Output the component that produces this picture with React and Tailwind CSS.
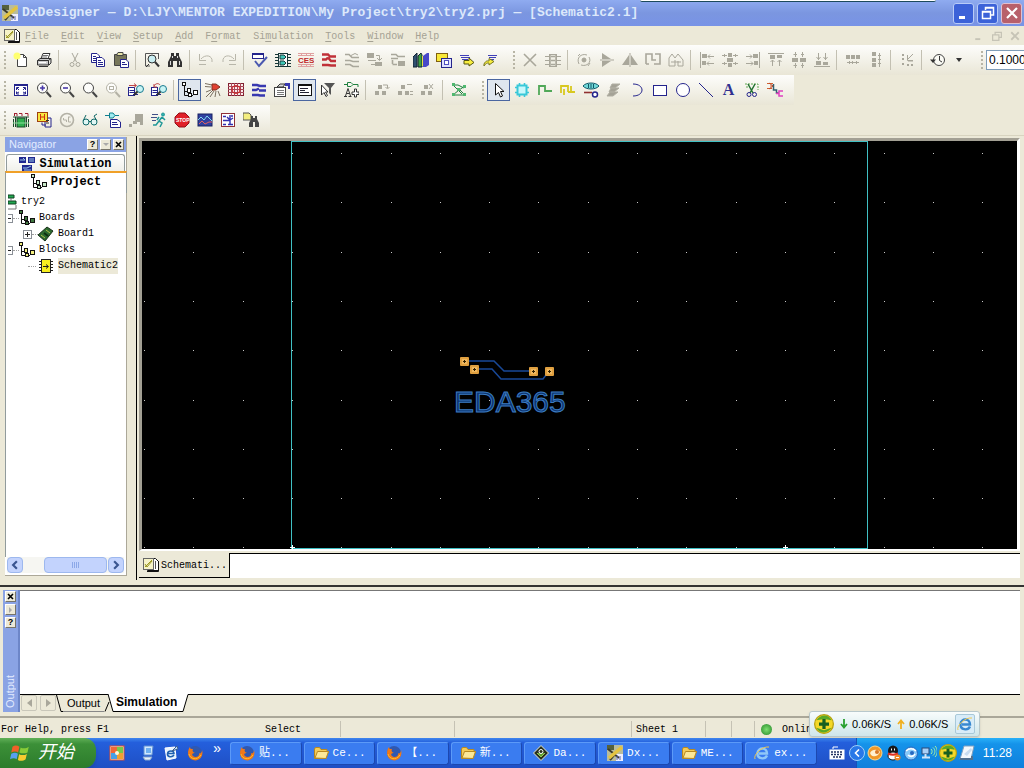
import React from 'react';

const NAVY = '#24248c';
const GREY = '#a9a79b';

const Icon = ({ children, color = '#333333', size = 'size-4' }) => (
  <svg
    viewBox="0 0 16 16"
    className={`${size} shrink-0`}
    fill="none"
    stroke={color}
    strokeWidth="1"
    aria-hidden="true"
  >
    {children}
  </svg>
);

const Box = ({ x, y, w, h, fill, stroke }) => (
  <rect x={x + 0.5} y={y + 0.5} width={w - 1} height={h - 1} fill={fill || 'none'} stroke={stroke} />
);

// Align / distribute icons share the same small grey blocks and arrows
const Blocks = ({ items, d }) => (
  <Icon color={GREY}>
    {items.map(([x, y, w, h], i) => (
      <rect key={i} x={x} y={y} width={w} height={h} fill={GREY} stroke="none" />
    ))}
    <path d={d} />
  </Icon>
);

const TreeGlyph = ({ fill = '#fff' }) => (
  <>
    <path d="M2.5 4V13.5H11M5 9.5H7M2.5 9.5H5M7.5 11V13.5" stroke="#111" />
    <Box x={0} y={0} w={4} h={4} fill={fill} stroke="#111" />
    <Box x={5} y={6} w={4} h={5} fill={fill} stroke="#111" />
    <Box x={11} y={8} w={5} h={5} fill={fill} stroke="#111" />
    <Box x={6} y={11} w={4} h={4} fill={fill} stroke="#111" />
  </>
);

const Magnifier = ({ children, color = '#444' }) => (
  <Icon color={color}>
    <circle cx="6.5" cy="6" r="5" fill="#fdfdfb" />
    <path d="M10.5 10L15 15" strokeWidth="2" />
    {children}
  </Icon>
);

const Arrowed = ({ flip }) => (
  <Icon>
    <Box x={0} y={5} w={7} h={9} fill="#fff" stroke={NAVY} />
    <path d="M1.5 8.5H6M1.5 10.5H6M5 12.5H10" stroke={NAVY} />
    <circle cx="12" cy="7" r="3.5" fill="#c8f4f4" stroke="#1b7a90" />
    <path d="M9.5 9.5L6 13" stroke="#333" strokeWidth="2" />
    <path d={flip ? 'M3 4.5C4 1 8 1 9 3M3 2V5H6' : 'M1 3.5H8M6 1.5L8.5 3.5L6 5.5'} stroke="#c04848" />
  </Icon>
);

const Binoculars = () => (
  <Icon>
    <path d="M4 1H7V4H9V1H12V4L15 10V15H10V9H6V15H1V10L4 4Z" fill="#333" stroke="none" />
    <path d="M3.5 9V13M5.5 4V6M12.5 9V13M10.5 4V6" stroke="#ddd" />
  </Icon>
);

const Arrow = ({ redo }) => (
  <Icon color="#b8b6aa">
    <path d={redo ? 'M2 10C1 3 9 2 13 7M14.5 2V8.5H8M8 12.5H15' : 'M14 10C15 3 7 2 3 7M1.5 2V8.5H8M1 12.5H8'} />
  </Icon>
);

const Stack = ({ dir }) => (
  <Icon color={GREY}>
    <path fill={GREY} stroke="none" d="M4 3H8V7H4ZM1 9H5V13H1ZM8 9H12V13H8Z" />
    <path d={dir} />
  </Icon>
);

const SchematicDoc = ({ size }) => (
  <Icon size={size}>
    <path d="M4.5 1.5H12.5L15.5 4.5V13.5H4.5Z" fill="#fff" stroke="#111" />
    <path d="M4 14.5H15.5V4" stroke="#111" />
    <Box x={0} y={1} w={11} h={12} fill="#f6f3c8" stroke="#666" />
    <path d="M2 10L9 3M2 7L4 10L9 4" stroke="#9a9620" />
    <path d="M12.5 4V12" stroke="#555" />
  </Icon>
);

const DxLogo = ({ size }) => (
  <Icon size={size}>
    <rect width="16" height="16" fill="#b9bc9c" stroke="none" />
    <path d="M0 0H7V5H0Z" fill="#55603c" stroke="none" />
    <path d="M9 9H16V16H9Z" fill="#eef" stroke="none" />
    <path d="M1 4L12 13M3 15L8 9" stroke="#3a3a2c" strokeWidth="2" />
    <path d="M2 13L15 2" stroke="#e4c440" strokeWidth="3.5" />
    <path d="M10 15V11M13 15V11" stroke="#5a66b0" />
  </Icon>
);

const ICONS = {
  new: (
    <Icon>
      <path d="M4.5 2.5H10.5L13.5 5.5V14.5H4.5Z" fill="#fff" stroke="#444" />
      <path d="M10.5 2.5V5.5H13.5" stroke="#444" />
      <circle cx="4" cy="4" r="3.5" fill="#ffff70" stroke="none" />
    </Icon>
  ),
  print: (
    <Icon>
      <path d="M5 6.5L7 1.5H14L12 6.5" fill="#fff" />
      <path d="M7 3.5H12M6 5H11" stroke="#777" />
      <path d="M1.5 8.5L4 6.5H15L12.5 8.5ZM1.5 8.5V13H12.5V8.5M15 6.5V11L12.5 13.5M3 14.5H12" fill="#ccc" />
      <path d="M3 10.5H10" stroke="#fff" />
    </Icon>
  ),
  cut: (
    <Icon color={GREY}>
      <path d="M5 1L9.5 10M11 1L6.5 10" />
      <circle cx="5" cy="12.5" r="2" />
      <circle cx="11" cy="12.5" r="2" />
    </Icon>
  ),
  copy: (
    <Icon>
      <path d="M1.5 1.5H7L9.5 4V10.5H1.5Z" fill="#fff" stroke={NAVY} />
      <path d="M3 4.5H6M3 6.5H7M3 8.5H7" stroke={NAVY} />
      <path d="M6.5 5.5H12L14.5 8V14.5H6.5Z" fill="#fff" stroke={NAVY} />
      <path d="M8 8.5H11M8 10.5H13M8 12.5H13" stroke={NAVY} />
    </Icon>
  ),
  paste: (
    <Icon>
      <path d="M1.5 2.5H13.5V13.5H1.5Z" fill="#77765a" stroke="#444" />
      <path d="M5 0.5H10V3.5H4V2Z" fill="#e8e4a8" stroke="#444" />
      <path d="M7.5 7.5H13L15.5 10V15.5H7.5Z" fill="#fff" stroke={NAVY} />
      <path d="M9 10.5H12M9 12.5H14" stroke={NAVY} />
    </Icon>
  ),
  preview: (
    <Icon>
      <path d="M1.5 1.5H15M1.5 1.5V14H6M14.5 1.5V7" stroke="#555" />
      <circle cx="8" cy="7" r="4" fill="#c9eef2" />
      <path d="M11 10L15 14.5" strokeWidth="2" />
      <path d="M5 12L2 15" />
    </Icon>
  ),
  find: <Binoculars />,
  undo: <Arrow />,
  redo: <Arrow redo />,
  verify: (
    <Icon color={NAVY}>
      <Box x={0} y={1} w={12} h={6} fill="#fff" stroke={NAVY} />
      <path d="M0 2H12" strokeWidth="2" />
      <path d="M3 9L7 14L15 5" stroke="#4a58b0" strokeWidth="2" />
    </Icon>
  ),
  chip: (
    <Icon color="#183838">
      <path d="M0 2.5H16M0 5.5H16M0 8.5H16M0 11.5H16M0 14.5H16" />
      <Box x={3} y={1} w={10} h={14} fill="#fff" stroke="#183838" />
      <path d="M5 3H9L11 5L9 7H5ZM5 9H9L11 11L9 13H5Z" fill="#40c8b8" />
    </Icon>
  ),
  ces: (
    <Icon color="#e0a0a0">
      <path d="M0 1.5H16M0 3.5H16M0 12.5H16M0 14.5H16M3.5 1V4M8.5 1V4M12.5 1V4M3.5 12V15M8.5 12V15M12.5 12V15" />
      <text x="0" y="11" fill="#c02828" stroke="none" className="font-['Liberation_Sans',sans-serif] text-[8px] font-bold">CES</text>
    </Icon>
  ),
  redTraces: (
    <Icon color="#c03038">
      <path d="M1 2.5H7L9 4.5H15M1 7.5H5L7 5.5M7 5.5L10 9H15M1 13H7L10 13.5H15" strokeWidth="2.4" />
    </Icon>
  ),
  greyTraces: (
    <Icon color={GREY}>
      <path d="M1 2.5H5L8 5.5H15M1 8.5H6L9 9.5H15M1 12.5H6L9 14.5H15" strokeWidth="1.6" />
      <path d="M7 3.5L11 1.5L14 3" />
    </Icon>
  ),
  greyDown: (
    <Icon color={GREY}>
      <path d="M0 1H7V6H0ZM8 10H15V14H8Z" fill={GREY} stroke="none" />
      <path d="M9 3.5H12.5V8M10 6L12.5 8.5L15 6M1 8.5H9M4 12.5H8" />
    </Icon>
  ),
  greyUp: (
    <Icon color={GREY}>
      <path d="M8 9H15V14H8Z" fill={GREY} stroke="none" />
      <path d="M1 2.5H6L8 4.5H15M1 6.5H8M2.5 12V8M2.5 12.5H7" strokeWidth="1.6" />
    </Icon>
  ),
  books: (
    <Icon>
      <path d="M0 5L4 1V15H0Z" fill="#305070" stroke="#123" />
      <path d="M5 4L8 1L9 3V15H5Z" fill="#40a040" stroke="#123" />
      <path d="M10 4L14 1H16V13L13 15H10Z" fill="#4848c8" stroke="none" />
      <path d="M9.5 4V14" stroke="#e8e048" />
    </Icon>
  ),
  layers: (
    <Icon>
      <Box x={0} y={1} w={12} h={9} fill="#f8e838" stroke="#806010" />
      <Box x={5} y={6} w={11} h={10} fill="#dfe2ff" stroke={NAVY} />
      <Box x={8} y={8} w={5} h={5} fill="#fff" stroke="#5050c0" />
    </Icon>
  ),
  forward: (
    <Icon>
      <path d="M1 3.5H10M2 5.5H11M3 7.5H9" stroke="#4040b8" />
      <path d="M5 8.5H10V6L15 10.5L10 14V12H5Z" fill="#f8ee40" stroke="#555510" />
    </Icon>
  ),
  back: (
    <Icon>
      <path d="M6 3.5H15M7 5.5H14M8 7.5H12" stroke="#4040b8" />
      <path d="M2 12C4 8 6 9 7 9V6.5L12 9.5L7 13V11C5 11 4 11 2 14Z" fill="#f8ee40" stroke="#777720" />
    </Icon>
  ),
  del: (
    <Icon color={GREY}>
      <path d="M2 2L14 14M14 2L2 14" strokeWidth="1.6" />
    </Icon>
  ),
  part: (
    <Icon color={GREY}>
      <path d="M0 4.5H16M0 8.5H16M0 12.5H16" />
      <Box x={4} y={2} w={8} h={13} fill="#f2f0e6" stroke={GREY} />
      <path d="M6 4.5H10M6 8.5H10M6 12.5H10M5 2V15M11 2V15" strokeWidth="1.5" />
    </Icon>
  ),
  rotate: (
    <Icon color={GREY}>
      <path d="M3 12C0 6 5 1 11 3M13 5C16 10 11 15 5 13M2 4L4 2M14 11L12 14" />
      <circle cx="8" cy="8" r="2" fill={GREY} />
    </Icon>
  ),
  flip: (
    <Icon color={GREY}>
      <path d="M3 1L12 7H3ZM3 9H12L3 15Z" fill={GREY} stroke="none" />
      <path d="M1 8H15" />
    </Icon>
  ),
  mirror: (
    <Icon color={GREY}>
      <path d="M7 3L0 13H7ZM9 3L16 13H9Z" fill={GREY} stroke="none" />
      <path d="M8 1V15" />
    </Icon>
  ),
  reroute: (
    <Icon color={GREY}>
      <path d="M1 12V2H7V8H11M10 2H15V12H9M1 12H4" strokeWidth="1.6" />
    </Icon>
  ),
  house: (
    <Icon color={GREY}>
      <path d="M1 14V6L4 2L7 6L10 2L15 8V14H10V9M1 14H7V8" />
      <path d="M3 10H13" />
    </Icon>
  ),
  alignLeft: <Blocks items={[[3, 2, 5, 4], [3, 9, 4, 4]]} d="M1.5 0V16M9 4.5H15M11 2.5L9 4.5L11 6.5M8 11.5H15M10 9.5L8 11.5L10 13.5" />,
  alignMid: <Blocks items={[[6, 1, 4, 4], [5, 6, 6, 4], [6, 11, 4, 4]]} d="M0 3.5H5M11 3.5H16M0 11.5H5M11 11.5H16M2.5 2V5M13.5 2V5M2.5 10V13M13.5 10V13" />,
  alignRight: <Blocks items={[[8, 2, 5, 4], [9, 9, 4, 4]]} d="M14.5 0V16M1 4.5H7M5 2.5L7 4.5L5 6.5M1 11.5H8M6 9.5L8 11.5L6 13.5" />,
  alignTop: <Blocks items={[[2, 3, 5, 4], [9, 3, 5, 3]]} d="M0 1.5H16M4.5 8V14M2.5 10L4.5 8L6.5 10M11.5 8V14M9.5 10L11.5 8L13.5 10" />,
  alignCenter: <Blocks items={[[1, 6, 6, 4], [9, 6, 6, 4]]} d="M4.5 0V5M11.5 0V5M4.5 11V16M11.5 11V16M2.5 2.5H6M10 2.5H13M2.5 13.5H6M10 13.5H13" />,
  alignBottom: <Blocks items={[[2, 9, 5, 4], [9, 10, 5, 3]]} d="M0 14.5H16M4.5 1V8M2.5 5L4.5 7.5L6.5 5M11.5 1V8M9.5 5L11.5 7.5L13.5 5" />,
  distH: <Blocks items={[[1, 3, 4, 4], [6, 3, 4, 4], [11, 3, 4, 4]]} d="M2 10.5H14M4.5 9V12M7.5 9V12M11.5 9V12" />,
  distV: <Blocks items={[[4, 0, 4, 4], [4, 6, 4, 4], [4, 11, 4, 4]]} d="M11.5 1V15M10 3.5H13M10 7.5H13M10 11.5H13" />,
  snap: <Blocks items={[[3, 2, 2, 2], [3, 6, 2, 2], [3, 11, 2, 2], [8, 12, 2, 2], [12, 12, 2, 2]]} d="M14 2L8 8M8.5 3V8.5H14M12 4L14 2M9 9L14 9" />,
  history: (
    <Icon>
      <circle cx="9" cy="8" r="5.5" fill="#fafaf4" stroke="#444" />
      <path d="M9.5 4V8.5L12 10" />
      <path d="M0 7.5H6L3 11Z" fill="#333" stroke="none" />
    </Icon>
  ),
  fit: (
    <Icon color={NAVY}>
      <Box x={1} y={2} w={14} h={12} fill="#fff" stroke={NAVY} />
      <path d="M1 3H15" strokeWidth="2" />
      <path d="M3.5 8V5.5H6M12.5 8V5.5H10M3.5 9.5V12H6M12.5 9.5V12H10" />
      <path d="M4 6L6 8M12 6L10 8M4 11L6 10M12 11L10 10" />
    </Icon>
  ),
  zoomIn: (
    <Magnifier>
      <path d="M4 6H9M6.5 3.5V8.5" stroke="#4838a8" strokeWidth="1.6" />
    </Magnifier>
  ),
  zoomOut: (
    <Magnifier>
      <path d="M4 6H9" stroke="#4838a8" strokeWidth="1.6" />
    </Magnifier>
  ),
  zoom: <Magnifier />,
  zoomArea: (
    <Magnifier color="#b4b2a6">
      <rect x="4.5" y="4.5" width="4" height="3" />
    </Magnifier>
  ),
  findNext: <Arrowed />,
  findPrev: <Arrowed flip />,
  tree: (
    <Icon>
      <TreeGlyph />
    </Icon>
  ),
  redArrow: (
    <Icon color="#7a7060">
      <path d="M0 1.5L7 3M0 4.5L6 5M8 8L1 15M9 9L5 15M11 9L10 15M13 9L15 14M1 10L6 8" />
      <path d="M7 2H11L15 5L11 8H7Z" fill="#e04030" stroke="#803020" />
    </Icon>
  ),
  grid: (
    <Icon color="#a84858">
      <Box x={0} y={1} w={16} h={13} fill="#fbecec" stroke="#802030" />
      <path d="M3.5 1V14M6.5 1V14M9.5 1V14M12.5 1V14M0 4.5H16M0 7.5H16M0 10.5H16" />
      <circle cx="8" cy="7.5" r="4" stroke="#d02020" />
    </Icon>
  ),
  blueTraces: (
    <Icon color="#3838b0">
      <path d="M1 3H6L9 4H15M1 8H5L8 6.5M8 8.5H15M1 13H7L9 13.500H14" strokeWidth="2.4" />
    </Icon>
  ),
  properties: (
    <Icon>
      <Box x={0} y={5} w={12} h={10} fill="#fff" stroke="#444" />
      <path d="M3 8.5H10M3 10.5H10M3 12.5H10" stroke="#777" />
      <path d="M3 5L6 2H11L9 5Z" fill="#ddd" />
      <path d="M11 1H16V7H14V4H11Z" fill="#3838b0" stroke="none" />
    </Icon>
  ),
  output: (
    <Icon>
      <Box x={1} y={2} w={14} h={12} fill="#fff" stroke="#111" />
      <path d="M1 3H15" stroke="#111" strokeWidth="2" />
      <path d="M3 6.5H11M3 8.5H8M3 10.5H12" stroke="#223" />
    </Icon>
  ),
  filter: (
    <Icon>
      <path d="M1.5 3V13L4 10.5L6 14.5L7.5 13.5L5.5 10H8Z" fill="#fff" />
      <path d="M4 1H15L11 6V13L9 11V6Z" fill="#555" stroke="none" />
    </Icon>
  ),
  addText: (
    <Icon>
      <path d="M1 2.5H4M4.5 0.5H8L10 2.5L8 4.5H4.5ZM10 2.5H15V5" stroke="#208040" />
      <path d="M1 14.5H4M5.5 14.5H8.5M2.5 14L5 6.5L7.5 14M3.5 11.5H6.5" />
      <path d="M11.5 7V10H9V12.5H11.5V15H13.5V12.5H16V10H13.5V7Z" fill="#fff" />
    </Icon>
  ),
  stack1: <Stack dir="M9 3H13.5V6M11.5 5L13.5 7L15.5 5" />,
  stack2: <Stack dir="M10 2.5H15M13 9.5H16M13 12.5H16" />,
  stack3: <Stack dir="M9 2L13 7M13 2L9 7" />,
  nodes: (
    <Icon color="#208040">
      <path d="M2 3H7L13 6M2 3L11 12M2 13L8 8L14 4M2 13H14L9 8" />
      <path d="M1 1H4V4H1ZM12 3H15V6H12ZM1 11H4V14H1ZM12 11H15V14H12ZM6 6H9V9H6Z" fill="#50b870" stroke="none" />
    </Icon>
  ),
  pointer: (
    <Icon>
      <path d="M4.5 1.5V13L7.5 10.5L9.5 15L11.5 14L9.5 9.5H13Z" fill="#fff" stroke="#111" />
    </Icon>
  ),
  cyanPart: (
    <Icon color="#38c8d8">
      <path d="M1 5.5H15M1 10.5H15M5.5 1V15M10.5 1V15" strokeWidth="1.6" />
      <rect x="3.5" y="3.5" width="9" height="9" fill="#c8f8fc" strokeWidth="2" />
    </Icon>
  ),
  net: (
    <Icon color="#50a858">
      <path d="M2 13V4H8V9H15" strokeWidth="1.8" />
    </Icon>
  ),
  bus: (
    <Icon color="#d8c820">
      <path d="M1 11V4H8V10M4 13V7M8 10H11V4M11 10H15" strokeWidth="1.8" />
    </Icon>
  ),
  eye: (
    <Icon>
      <path d="M0 4C3 0 13 0 16 4C13 8 3 8 0 4Z" fill="#70d8d8" stroke="#105868" />
      <path d="M5.5 2V6M8 2V6M10.5 2V6" stroke="#105868" />
      <path d="M1 10.5H9" stroke="#903030" strokeWidth="1.6" />
      <circle cx="12" cy="12.5" r="2.5" stroke={NAVY} fill="#fff" strokeWidth="1.5" />
    </Icon>
  ),
  ripper: (
    <Icon color="#b0aea2">
      <path d="M6 2H14L9 6H4ZM5 6H13L8 10H3ZM4 10H12L7 14H1Z" fill="#a4a296" />
    </Icon>
  ),
  arc: (
    <Icon color={NAVY}>
      <path d="M4 2C16 2 16 14 4 14" />
    </Icon>
  ),
  rect: (
    <Icon color={NAVY}>
      <Box x={1} y={3} w={14} h={11} fill="#fff" stroke={NAVY} />
    </Icon>
  ),
  circle: (
    <Icon color={NAVY}>
      <circle cx="8" cy="8" r="6.5" fill="#fff" />
    </Icon>
  ),
  line: (
    <Icon color={NAVY}>
      <path d="M1 1L15 15" />
    </Icon>
  ),
  scissors: (
    <Icon color={NAVY}>
      <path d="M1 2H14V8M2 5H5" stroke="#60a850" strokeDasharray="2 1" />
      <path d="M4 2L9 11M11 2L6 11" stroke="#207030" strokeWidth="1.5" />
      <circle cx="5" cy="12.5" r="2" />
      <circle cx="10.5" cy="12.5" r="2" />
    </Icon>
  ),
  gates: (
    <Icon>
      <path d="M0 1.5H6M0 6.5H5M3 4H7" stroke="#d06030" />
      <path d="M2 1L6 4L2 7" stroke="#c04828" />
      <path d="M6.5 2V8H9.5V11H12" stroke="#306070" strokeWidth="1.5" />
      <path d="M16 9H12V14H16M9 11.5H12" stroke="#e040c0" strokeWidth="1.5" />
    </Icon>
  ),
  board: (
    <Icon>
      <path d="M1 1.5H4V4M6 1.5H9V4M12 1.5H15V4M1.5 1V4" stroke="#a02030" />
      <path d="M0 5H16M2.5 5V15M13.5 5V15M0.5 7V15M15.5 7V15" stroke="#184828" />
      <rect x="4" y="6" width="8" height="9" fill="#30b050" stroke="#184828" />
      <path d="M0 11H16" stroke="#8ae09a" />
    </Icon>
  ),
  hotDoc: (
    <Icon>
      <Box x={1} y={0} w={11} h={10} fill="#f8e840" stroke="#a04010" />
      <path d="M4.5 2V8M8.5 2V8M4.5 5H8.5" stroke="#d03010" />
      <path d="M6 10.5V13H10M12 6H15V15H9V10" stroke={NAVY} />
      <path d="M10 8.5H13M10 11H13" stroke="#333" />
    </Icon>
  ),
  gauge: (
    <Icon color="#b4b2a6">
      <circle cx="8" cy="8" r="6.5" strokeWidth="1.6" />
      <path d="M4.5 6V8H7.5V10M9 5H11.5M9.5 5V10H12" />
    </Icon>
  ),
  glasses: (
    <Icon color="#106868">
      <path d="M1 9L4 3M15 9L12 4L15 2" />
      <circle cx="4" cy="10" r="3" fill="#e0f6f4" />
      <circle cx="12" cy="10" r="3" fill="#e0f6f4" />
      <path d="M7 9.5H9" />
    </Icon>
  ),
  gateDoc: (
    <Icon>
      <path d="M0 3.5H4M4.5 1H8L10 3.5L8 6H4.5ZM10 3.5H14" stroke="#108090" fill="#a0ecf0" />
      <path d="M5.5 7.5H12L15.5 10V15.5H5.5Z" fill="#fff" stroke={NAVY} />
      <path d="M7 10.5H12M7 12.5H13" stroke={NAVY} />
    </Icon>
  ),
  greyDoc: (
    <Icon color={GREY}>
      <path d="M7 2H15V13H12V10H9V12H5V9H7ZM1 12H4V15H1Z" fill={GREY} stroke="none" />
    </Icon>
  ),
  run: (
    <Icon color="#209898">
      <path d="M1 2.5H7M0 5.5H6M1 8.5H5" stroke="#405088" />
      <circle cx="12" cy="2.5" r="1.5" fill="#30b0b0" />
      <path d="M11 5L8 9L11 11L9 15M11 5L14 8M8 5L6 8M8 9L5 13H2" strokeWidth="1.5" />
    </Icon>
  ),
  stop: (
    <Icon>
      <path d="M5 1H11L15 5V11L11 15H5L1 11V5Z" fill="#e02028" stroke="#901018" />
      <text x="2" y="10" fill="#fff" stroke="none" className="font-['Liberation_Sans',sans-serif] text-[5px] font-bold">STOP</text>
    </Icon>
  ),
  wave: (
    <Icon>
      <rect x="1" y="2" width="14" height="12" fill="#3040a0" stroke="#182060" />
      <path d="M1 8L4 5L7 8L10 4L15 9" stroke="#80d8f0" />
      <path d="M2 12L5 9L8 12L12 10H15" stroke="#e06060" />
    </Icon>
  ),
  sheet: (
    <Icon>
      <Box x={1} y={1} w={14} h={14} fill="#fff" stroke="#903038" />
      <path d="M3 4.5H6M3 8.5H6M3 12.5H6M6 8.5H10M10 3V8L7 5M10 12V8L13 6M11 4H13M8 12.5H13" stroke="#3030b0" strokeWidth="1.4" />
    </Icon>
  ),
  findDoc: (
    <Icon>
      <path d="M0 1H6L8 3V8H0Z" fill="#f4ee80" stroke="#555" />
      <path d="M8 4H10V6H12V4H14V7L16 11V15H12V10H10V15H6V11L8 7Z" fill="#444" stroke="none" />
    </Icon>
  ),
};

const ROW1A = ['new', 'print', '|', 'cut', 'copy', 'paste', '|', 'preview', 'find', '|', 'undo', 'redo', '|', 'verify', 'chip', 'ces', 'redTraces', 'greyTraces', 'greyDown', 'greyUp', 'books', 'layers', 'forward', 'back'];
const ROW1B = ['del', 'part', '|', 'rotate', 'flip', 'mirror', 'reroute', 'house', '|', 'alignLeft', 'alignMid', 'alignRight', 'alignTop', 'alignCenter', 'alignBottom', '|', 'distH', 'distV', '|', 'snap', '|', 'history', 'more'];
const ROW2A = ['fit', 'zoomIn', 'zoomOut', 'zoom', 'zoomArea', 'findNext', 'findPrev', '|', 'tree', 'redArrow', 'grid', 'blueTraces', 'properties', 'output', 'filter', 'addText', '|', 'stack1', 'stack2', 'stack3', '|', 'nodes'];
const ROW2B = ['pointer', 'cyanPart', 'net', 'bus', 'eye', 'ripper', 'arc', 'rect', 'circle', 'line', 'text', 'scissors', 'gates'];
const ROW3 = ['board', 'hotDoc', 'gauge', 'glasses', 'gateDoc', 'greyDoc', 'run', 'stop', 'wave', 'sheet', 'findDoc'];
const PRESSED = ['tree', 'output', 'pointer'];

const Grip = () => <div className="w-[9px] shrink-0 flex justify-center py-1.5"><div className="border-l-2 border-dotted border-[#b8b5a5]" /></div>;

const Toolbar = ({ items, children }) => (
  <div className="flex h-full shrink-0 items-stretch bg-linear-to-b from-[#fdfdfb] to-[#e9e6d6] pr-2">
    <Grip />
    <div className="flex items-center">
      {items.map((name, i) => {
        if (name === '|') {
          return <span key={i} className="mr-1 ml-[3px] h-5 w-px bg-[#c3c0b2]" />;
        }
        if (name === 'more') {
          return (
            <button key={i} type="button" aria-label="more" className="flex h-[22px] w-5 items-center justify-center">
              <svg viewBox="0 0 6 4" className="h-1 w-1.5"><path d="M0 0H6L3 4Z" fill="#333" /></svg>
            </button>
          );
        }
        return (
          <button
            key={i}
            type="button"
            aria-label={name}
            className={`flex h-[22px] w-[23px] items-center justify-center border ${
              PRESSED.includes(name) ? 'border-[#4a66a0] bg-[#dfe6ee]' : 'border-transparent'
            }`}
          >
            {name === 'text' ? (
              <span className="font-['Liberation_Serif',serif] text-base leading-4 font-bold text-[#303090]">A</span>
            ) : (
              ICONS[name]
            )}
          </button>
        );
      })}
    </div>
    {children}
  </div>
);

const MENUS = [
  ['', 'F', 'ile'],
  ['', 'E', 'dit'],
  ['', 'V', 'iew'],
  ['', 'S', 'etup'],
  ['', 'A', 'dd'],
  ['F', 'o', 'rmat'],
  ['Si', 'm', 'ulation'],
  ['', 'T', 'ools'],
  ['', 'W', 'indow'],
  ['', 'H', 'elp'],
];

const TitleBar = () => (
  <header className="relative flex h-[26px] shrink-0 items-center bg-linear-to-b from-[#8fabf0] via-[#7b96e0] to-[#7893e6] pr-0.5 pl-0.5">
    <div className="absolute top-0 right-[88px] h-0.5 w-[296px] rounded-b-sm border-b border-[#1c4a5c] bg-white" />
    <DxLogo />
    <h1 className="ml-1 flex-1 truncate text-[13px] font-bold whitespace-pre text-[#dce8fb]">
      {'DxDesigner — D:\\LJY\\MENTOR EXPEDITION\\My Project\\try2\\try2.prj — [Schematic2.1]'}
    </h1>
    <div className="flex gap-[3px]">
      <button type="button" aria-label="Minimize" className="flex size-[21px] items-center justify-center rounded-[3px] border border-[#b8cbf8] bg-[#3c62d8]">
        <Icon color="#fff"><path d="M3 12.5H9" strokeWidth="3" /></Icon>
      </button>
      <button type="button" aria-label="Restore" className="flex size-[21px] items-center justify-center rounded-[3px] border border-[#b8cbf8] bg-[#3c62d8]">
        <Icon color="#fff"><path d="M5.5 5V2.5H13.5V10H11M5 3H14M2.5 6.5H10.5V13.5H2.5ZM2 7H11" strokeWidth="1.5" /></Icon>
      </button>
      <button type="button" aria-label="Close" className="flex size-[21px] items-center justify-center rounded-[3px] border border-[#e0c0d0] bg-[#b8606a]">
        <Icon color="#fff"><path d="M3 3L13 13M13 3L3 13" strokeWidth="2.2" /></Icon>
      </button>
    </div>
  </header>
);

const MenuBar = () => (
  <nav className="flex h-[19px] shrink-0 items-center pr-1 pl-1">
    <SchematicDoc />
    <div className="ml-[5px] flex flex-1 gap-3 pt-0.5 text-[10px] text-[#a5a294]">
      {MENUS.map(([pre, key, post]) => (
        <button key={key + post} type="button">
          {pre}<u className="underline-offset-2">{key}</u>{post}
        </button>
      ))}
    </div>
    <div className="flex gap-2 text-[#c6c4b6]">
      <button type="button" aria-label="Minimize sheet"><Icon size="size-2.5" color="currentColor"><path d="M2 13H10" strokeWidth="3" /></Icon></button>
      <button type="button" aria-label="Restore sheet"><Icon size="size-2.5" color="currentColor"><path d="M5 5V2H15V10H11M1 6H11V15H1Z" strokeWidth="2" /></Icon></button>
      <button type="button" aria-label="Close sheet"><Icon size="size-2.5" color="currentColor"><path d="M2 2L14 14M14 2L2 14" strokeWidth="3" /></Icon></button>
    </div>
  </nav>
);

const TinyButton = ({ children, label }) => (
  <button
    type="button"
    aria-label={label}
    className="flex size-[11px] items-center justify-center border border-[#fff] border-r-[#77756a] border-b-[#77756a] bg-[#ece9d8] font-['Liberation_Sans',sans-serif] text-[9px] leading-none font-bold text-black"
  >
    {children}
  </button>
);

const CrossMark = () => (
  <svg viewBox="0 0 7 7" className="size-[7px]"><path d="M1 1L6 6M6 1L1 6" stroke="#000" strokeWidth="1.6" /></svg>
);

const Expander = ({ open }) => (
  <svg viewBox="0 0 9 9" className="size-[9px] shrink-0" fill="#fff" stroke="#8a8f96">
    <rect x="0.5" y="0.5" width="8" height="8" />
    <path d={open ? 'M2 4.5H7' : 'M2 4.5H7M4.5 2V7'} stroke="#222" />
  </svg>
);

// Root nodes sit half behind the left edge of the tree
const CutExpander = () => (
  <span className="flex w-[5px] shrink-0 justify-end overflow-hidden"><Expander open /></span>
);

const Dots = ({ width = 'w-2' }) => <span className={`${width} shrink-0 border-t border-dotted border-[#a0a0a0]`} />;

const Navigator = () => (
  <aside className="mt-px mb-1 ml-[5px] flex w-[122px] shrink-0 flex-col border-r border-b border-[#aca899] bg-white">
    <div className="flex h-[15px] shrink-0 items-center gap-0.5 bg-[#8aa3e4] pr-0.5 pl-1">
      <h2 className="flex-1 font-['Liberation_Sans',sans-serif] text-[11px] text-[#e2ebff]">Navigator</h2>
      <TinyButton label="Help">?</TinyButton>
      <TinyButton label="Menu"><svg viewBox="0 0 6 4" className="h-1 w-1.5"><path d="M0 0H6L3 3Z" fill="#aaa" /></svg></TinyButton>
      <TinyButton label="Close"><CrossMark /></TinyButton>
    </div>
    <button type="button" className="mx-px mt-0.5 flex h-[17px] shrink-0 items-center justify-center gap-1 rounded-t-[3px] border border-b-0 border-[#919b9c] bg-linear-to-b from-white to-[#f0f0ea] pt-0.5 text-xs font-bold">
      <Icon>
        <path d="M0 1H7V7H0ZM9 1H16V7H9ZM3 9H13V15H3Z" fill="#202890" stroke="none" />
        <path d="M1 4H6L4 2M10 3H15M10 5H15M4 12H8L12 10M5 14H12" stroke="#9cc8e8" />
      </Icon>
      Simulation
    </button>
    <button type="button" className="-mr-px flex h-[22px] shrink-0 items-center justify-center gap-1 border border-t-2 border-b-0 border-[#919b9c] border-t-[#f0a028] bg-white pb-0.5 text-xs font-bold">
      <Icon><TreeGlyph fill="#c8e8c8" /></Icon>
      Project
    </button>
    <ul className="min-h-0 flex-1 overflow-hidden border-l border-[#919b9c] pt-px pl-0.5 text-[10px] leading-4">
      <li className="flex items-center gap-1">
        <svg viewBox="0 0 9 16" className="h-4 w-[9px] shrink-0">
          <path d="M0 1H6V4H0ZM0 7H8V10H0Z" fill="#20a850" stroke="#104020" />
          <path d="M3 4V7M0 15H8V11" fill="none" stroke="#777" />
        </svg>
        try2
      </li>
      <li>
        <div className="flex items-center">
          <CutExpander />
          <Dots width="w-1.5" />
          <Icon><TreeGlyph fill="#407840" /></Icon>
          <span className="pl-1">Boards</span>
        </div>
        <div className="flex items-center pl-[15px]">
          <Expander />
          <Dots width="w-1.5" />
          <Icon>
            <path d="M0 9L9 1L15 5L7 15Z" fill="#2c6a30" stroke="#183018" />
            <path d="M3 9L7 12M8 4L12 7" stroke="#b0c048" />
            <path d="M6 7L10 10" stroke="#0e3010" strokeWidth="2" />
          </Icon>
          <span className="pl-1">Board1</span>
        </div>
      </li>
      <li>
        <div className="flex items-center">
          <CutExpander />
          <Dots width="w-1.5" />
          <Icon><TreeGlyph fill="#f4f080" /></Icon>
          <span className="pl-1">Blocks</span>
        </div>
        <div className="flex items-center pl-5">
          <Dots />
          <span className="w-0.5" />
          <Icon>
            <path d="M1 3.5H15M1 6.5H15M1 9.5H15M1 12.5H15" stroke="#222" />
            <rect x="3.5" y="1.5" width="9" height="13" fill="#f8f020" stroke="#222" />
            <path d="M5 8.5H10M8 6.5L10.5 8.5L8 10.5" stroke="#222" />
          </Icon>
          <span className="ml-1 bg-[#ece9d8]">Schematic2</span>
        </div>
      </li>
    </ul>
    <div className="mx-0.5 mb-0.5 flex h-4 shrink-0 bg-[#f6f6f2]">
      <button type="button" aria-label="Scroll left" className="flex w-4 items-center justify-center rounded-sm border border-[#9db8ee] bg-[#c3d3fd]">
        <Icon size="size-2.5" color="#3a5590"><path d="M11 2L5 8L11 14" strokeWidth="3.5" /></Icon>
      </button>
      <div className="flex flex-1 justify-end pr-px">
        <div className="flex w-[63px] items-center justify-center gap-px rounded-sm border border-[#9db8ee] bg-[#c3d3fd]">
          <span className="h-1.5 w-px bg-[#8ca8e8]" />
          <span className="h-1.5 w-px bg-[#8ca8e8]" />
          <span className="h-1.5 w-px bg-[#8ca8e8]" />
          <span className="h-1.5 w-px bg-[#8ca8e8]" />
        </div>
      </div>
      <button type="button" aria-label="Scroll right" className="flex w-4 items-center justify-center rounded-sm border border-[#9db8ee] bg-[#c3d3fd]">
        <Icon size="size-2.5" color="#3a5590"><path d="M5 2L11 8L5 14" strokeWidth="3.5" /></Icon>
      </button>
    </div>
  </aside>
);

const GRID_STEP = 49.3;
const PADS = [[322, 220], [332, 228], [391, 230], [407, 230]];

const gridDots = [];
for (let row = 0; row < 9; row++) {
  for (let col = 0; col < 18; col++) {
    gridDots.push([2 + Math.round(col * GRID_STEP), 12 + Math.round(row * GRID_STEP)]);
  }
}

const SchematicCanvas = () => (
  <svg className="block min-h-0 w-full flex-1 bg-black" role="img" aria-label="EDA365">
    {gridDots.map(([x, y]) => (
      <rect key={`${x}-${y}`} x={x} y={y} width="1" height="1" fill="#c8c8c8" />
    ))}
    <rect x="149.5" y="0.5" width="576" height="407" fill="none" stroke="#40c0c4" />
    <path d="M148 406.5H153M150.5 404V408M641 406.5H646M643.5 404V408" stroke="#fff" />
    <g fill="none" stroke="#184898" strokeWidth="1.5">
      <path d="M322 220H352L362 230H391" />
      <path d="M332 228H350L359 238H401L407 230" />
    </g>
    {PADS.map(([x, y]) => (
      <g key={x}>
        <rect x={x - 4} y={y - 4} width="9" height="9" rx="1" fill="#e0a040" />
        <rect x={x - 2} y={y - 2} width="5" height="5" fill="#f0b860" />
        <path d={`M${x - 1} ${y + 0.5}H${x + 2}M${x + 0.5} ${y - 1}V${y + 2}`} stroke="#302000" />
      </g>
    ))}
    <text x="312" y="271" fill="#0c3470" stroke="#3c7cc0" strokeWidth="1" className="font-['Liberation_Sans',sans-serif] text-[30px]">
      EDA365
    </text>
  </svg>
);

const OutputPanel = () => (
  <section className="mt-[5px] flex h-[131px] shrink-0 border-t-2 border-[#333] pt-[3px] pb-1 font-['Liberation_Sans',sans-serif]">
    <div className="ml-[3px] flex w-[17px] shrink-0 flex-col items-center gap-0.5 border-r-2 border-[#6d86c8] bg-[#8aa3e4] pt-px">
      <TinyButton label="Close output"><CrossMark /></TinyButton>
      <TinyButton label="Pin output"><svg viewBox="0 0 4 6" className="h-1.5 w-1"><path d="M0 0V6L3 3Z" fill="#aaa" /></svg></TinyButton>
      <TinyButton label="Output help">?</TinyButton>
      <h2 className="mt-auto mb-1 rotate-180 text-[11px] leading-[13px] text-[#e2ebff] [writing-mode:vertical-rl]">Output</h2>
    </div>
    <div className="mr-1 flex flex-1 flex-col">
      <textarea aria-label="Simulation output" className="block min-h-0 w-full flex-1 resize-none border-t border-[#777] bg-white" readOnly />
      <div className="flex h-[18px] shrink-0">
        <div className="flex gap-[3px] border-t border-black pl-px">
          <button type="button" aria-label="Previous tab" className="flex size-4 items-center justify-center rounded-xs border border-[#c9c7ba]">
            <svg viewBox="0 0 5 8" className="h-2 w-[5px]"><path d="M5 0V8L0 4Z" fill="#a9a79b" /></svg>
          </button>
          <button type="button" aria-label="Next tab" className="flex size-4 items-center justify-center rounded-xs border border-[#c9c7ba]">
            <svg viewBox="0 0 5 8" className="h-2 w-[5px]"><path d="M0 0V8L5 4Z" fill="#a9a79b" /></svg>
          </button>
        </div>
        <div className="flex text-[11px] leading-[17px]">
          <button type="button" className="flex border-t border-black">
            <svg viewBox="0 0 7 17" className="h-[17px] w-[7px]"><path d="M0.5 0L5 16.5H7" fill="none" stroke="#000" /></svg>
            <span className="border-b border-[#888] px-1">Output</span>
          </button>
          <button type="button" className="flex text-xs leading-[17px] font-bold">
            <svg viewBox="0 0 12 18" className="h-[18px] w-3"><path d="M4 0H12V17.5H9Z" fill="#fff" /><path d="M4 0L9 17.5H12M5 8L1 17.5M0 0.5H4" fill="none" stroke="#000" /></svg>
            <span className="border-b border-black bg-white">Simulation</span>
            <svg viewBox="0 0 12 18" className="h-[18px] w-3"><path d="M0 0H11L6 17.5H0Z" fill="#fff" /><path d="M0 17.5H6L11 0.5H12" fill="none" stroke="#000" /></svg>
          </button>
        </div>
        <div className="flex-1 border-t border-black" />
      </div>
    </div>
  </section>
);

const StatusBar = () => (
  <footer className="flex h-[22px] shrink-0 items-center border-t-2 border-[#aaa799] pt-0.5 text-[10px] whitespace-pre">
    <span className="w-[265px] pl-px">For Help, press F1</span>
    <span className="w-[75px]">Select</span>
    <span className="h-4 w-[114px] border-l border-[#c5c2b4]" />
    <span className="h-4 flex-1 border-l border-[#c5c2b4]" />
    <span className="flex h-4 w-[74px] items-center border-l border-[#c5c2b4] pl-1">Sheet 1</span>
    <span className="h-4 w-[26px] border-l border-[#c5c2b4]" />
    <span className="h-4 w-[23px] border-l border-[#c5c2b4]" />
    <span className="flex h-4 items-center gap-2.5 border-l border-[#c5c2b4] pl-1.5">
      <span className="size-[11px] rounded-full bg-radial from-[#7ce070] to-[#208828]" />
      Online
    </span>
    <span className="w-[206px]" />
  </footer>
);

const Firefox = () => (
  <Icon>
    <circle cx="8" cy="8" r="7" fill="#3058b0" stroke="none" />
    <path d="M3 2C0 6 0 13 6 15C12 17 17 11 15 5C15 8 13 9 12 8C13 12 8 13 6 11C4 9 6 8 8 8C6 7 5 6 6 4C4 4 3 4 3 2Z" fill="#f07818" stroke="none" />
    <path d="M2 9C3 14 10 16 14 10" stroke="#f8c030" />
  </Icon>
);

const Folder = () => (
  <Icon>
    <path d="M1.5 4V13.5H13L15.5 6.5H14V4.5H8L6.5 2.5H2.5Z" fill="#f4cc58" stroke="#b88820" />
    <path d="M2 13L4.5 6.5H15.5L13 13.5Z" fill="#fce898" stroke="#b88820" />
  </Icon>
);

const Explorer = ({ color = '#90c8f8' }) => (
  <Icon color={color}>
    <path d="M13 10.5C11 15 3 14 3.5 8C4 2 13 2 13 8.5H5" strokeWidth="2.4" />
    <path d="M1 14C-1 10 8 1 15 2" stroke="#f0c850" />
  </Icon>
);

const TASKS = [
  { icon: <Firefox />, label: '贴...' },
  { icon: <Folder />, label: 'Ce...' },
  { icon: <Firefox />, label: '【...' },
  { icon: <Folder />, label: '新...' },
  {
    icon: (
      <Icon>
        <path d="M8 0.5L15.5 8L8 15.5L0.5 8Z" fill="#28301c" stroke="#e8e8d0" />
        <path d="M4 8L8 12L12 8" fill="#60a030" stroke="#98c858" />
        <circle cx="8" cy="6.5" r="2" stroke="#fff" />
      </Icon>
    ),
    label: 'Da...',
  },
  { icon: <DxLogo />, label: 'Dx...' },
  { icon: <Folder />, label: 'ME...' },
  { icon: <Explorer />, label: 'ex...' },
];

const Shield = ({ size }) => (
  <Icon size={size}>
    <circle cx="8" cy="8" r="7.5" fill="#f4d828" stroke="#b8a010" />
    <path d="M2 5C5 0 12 0 14 5L8 4ZM14 11C11 16 4 16 2 11L8 13Z" fill="#58a828" stroke="none" />
    <path d="M8 4V12M4 8H12" stroke="#186020" strokeWidth="2.6" />
  </Icon>
);

const Taskbar = () => (
  <div className="flex h-[30px] shrink-0 items-center bg-linear-to-b from-[#3f86ee] via-[#245fdc] via-15% to-[#1f4fc4] text-white">
    <button type="button" className="flex h-full w-24 shrink-0 items-center gap-2 rounded-r-xl bg-linear-to-b from-[#60b058] via-[#3c9038] via-20% to-[#2c7c2c] pl-2.5 shadow-md">
      <Icon size="size-5">
        <g stroke="none">
          <path d="M2 3C4 1.5 6 2 7.5 3L6.5 7.5C5 6.5 3 6.5 1 7.5Z" fill="#f06028" />
          <path d="M8.5 3.5C10 4.5 13 4.5 15 3L14 7.5C12 8.5 9.5 8.5 7.5 7.5Z" fill="#88cc38" />
          <path d="M1 8.5C3 7.5 5 7.5 6.3 8.5L5.3 13C4 12 2 12 0 13Z" fill="#58a0f0" />
          <path d="M7.3 9C9 10 12 10 13.5 8.5L12.5 13C10.5 14.5 8 14.5 6.3 13.5Z" fill="#f8cc30" />
        </g>
      </Icon>
      <span className="text-lg leading-5 italic">开始</span>
    </button>
    <div className="flex w-[134px] shrink-0 items-center pl-[13px]">
      <button type="button" aria-label="Gallery" className="mr-[15px]">
        <Icon>
          <rect x="1" y="1" width="14" height="14" fill="#f0e8d0" stroke="#e05030" />
          <path d="M2 2H8V8H2Z" fill="#f06838" stroke="none" />
          <path d="M8 2H14V8H8Z" fill="#78c848" stroke="none" />
          <path d="M2 8H8V14H2Z" fill="#48a0e8" stroke="none" />
          <path d="M8 8H14V14H8Z" fill="#f0a030" stroke="none" />
          <circle cx="8" cy="8" r="2" fill="#fff6d8" stroke="none" />
        </Icon>
      </button>
      <button type="button" aria-label="Computer" className="mr-[7px]">
        <Icon>
          <path d="M4 1H13L12 10H4Z" fill="#d0e8ff" stroke="#6090d0" />
          <path d="M6 3H11V8H6Z" fill="#70b0f0" stroke="none" />
          <path d="M3 12H12L10 15H5Z" fill="#e8f0f8" stroke="#88a8d0" />
        </Icon>
      </button>
      <button type="button" aria-label="Show desktop" className="mr-2">
        <Icon>
          <path d="M2 3L12 2L13 13L4 15Z" fill="#e8f4ff" stroke="#fff" />
          <path d="M11 10C9 13 4 12 4.5 8.5C5 5 11 5 11 8.5H5" stroke="#2060b0" strokeWidth="1.5" />
          <path d="M9 6L14 1L15 4Z" fill="#b8d8f8" stroke="#406090" />
        </Icon>
      </button>
      <button type="button" aria-label="Firefox"><Firefox /></button>
      <span className="ml-2.5 pb-2 text-sm leading-4">»</span>
    </div>
    <div className="flex min-w-0 flex-1 gap-0.5">
      {TASKS.map(({ icon, label }) => (
        <button
          key={label}
          type="button"
          className="flex h-[23px] min-w-0 flex-1 items-center gap-1 rounded-[3px] border border-[#5c9af8] border-r-[#1c48b0] border-b-[#1c48b0] bg-[#3a7cf0] pl-2 text-[11px]"
        >
          {icon}
          <span className="whitespace-nowrap">{label}</span>
        </button>
      ))}
    </div>
    <div className="ml-3 flex w-[27px] shrink-0 items-center">
      <Icon color="#fff">
        <rect x="1" y="5" width="14" height="9" fill="#fff" stroke="#fff" />
        <path d="M2 7H14M2 9.5H14M4 12H12" stroke="#203060" strokeWidth="1.5" strokeDasharray="2 1" />
        <path d="M4 4V2H9" />
      </Icon>
    </div>
    <div className="relative flex h-full shrink-0 items-center gap-0.5 border-l border-[#1850b8] bg-linear-to-b from-[#28b0f8] via-[#1593ea] via-20% to-[#1080dc] pr-3 pl-2.5">
      <button type="button" aria-label="Show hidden icons" className="absolute -left-2 flex size-4 items-center justify-center rounded-full border border-[#a0d0f8] bg-[#2878e8]">
        <svg viewBox="0 0 6 8" className="h-2 w-1.5" fill="none"><path d="M5 0.5L1.5 4L5 7.5" stroke="#fff" strokeWidth="1.6" /></svg>
      </button>
      <Icon>
        <circle cx="8" cy="8" r="7" fill="#f09828" stroke="#f8d890" />
        <path d="M3 8C5 4 11 4 13 7C11 12 6 12 4 10Z" fill="#fff0d0" stroke="none" />
        <circle cx="10" cy="7" r="2" fill="#d87828" stroke="none" />
      </Icon>
      <Icon>
        <ellipse cx="8" cy="6" rx="5" ry="5.5" fill="#181818" stroke="none" />
        <ellipse cx="8" cy="11" rx="5" ry="4" fill="#fff" stroke="#181818" />
        <path d="M3 8.5C6 10 10 10 13 8.5" stroke="#e03020" strokeWidth="2" />
        <path d="M6 4.5H7M9 4.5H10" stroke="#fff" strokeWidth="2" />
        <circle cx="12.5" cy="12.5" r="3" fill="#f08828" stroke="none" />
        <path d="M11 12.5H14" stroke="#fff" />
      </Icon>
      <Icon>
        <circle cx="8" cy="8.5" r="6.5" fill="#88c8f8" stroke="#2868c0" />
        <path d="M3 6C6 3 10 3 13 6M5 10C7 12 10 12 12 9" stroke="#fff" strokeWidth="1.6" />
        <circle cx="9" cy="8" r="2" fill="#2868c0" stroke="none" />
      </Icon>
      <Icon>
        <rect x="1" y="3" width="7" height="6" fill="#a8d0f8" stroke="#284878" />
        <path d="M1 12.5H9M4.5 9V12" stroke="#d0e4f8" strokeWidth="2" />
        <path d="M10 4C11.5 5 11.5 8 10 9M12 2.5C14.5 4.5 14.5 8.5 12 10.5M14 1C17 4 17 9 14 12" stroke="#a8f0a0" />
      </Icon>
      <Shield size="size-[18px]" />
      <Icon>
        <path d="M5 1H15L12 14H1Z" fill="#f4f8fc" stroke="#80a0c0" />
        <path d="M5 9L12 3L13 5L8 11Z" fill="#c8dcf0" stroke="none" />
        <path d="M1 14H13V11" stroke="#507090" strokeWidth="2" />
      </Icon>
      <time className="pl-1.5 font-['Liberation_Sans',sans-serif] text-xs">11:28</time>
    </div>
  </div>
);

const SpeedWidget = () => (
  <div className="absolute right-11 bottom-[31px] flex h-[26px] w-[171px] items-center rounded-[3px] border border-[#b8c8cc] bg-linear-to-b from-[#f8fcfc] to-[#cfe6ea] pr-1 pl-1 font-['Liberation_Sans',sans-serif] text-[11px] shadow">
    <Shield size="size-5" />
    <svg viewBox="0 0 8 10" className="ml-1.5 h-2.5 w-2 shrink-0" fill="none"><path d="M4 0V8M1 5L4 8.5L7 5" stroke="#28a030" strokeWidth="1.8" /></svg>
    <span className="ml-1">0.06K/S</span>
    <svg viewBox="0 0 8 10" className="ml-1.5 h-2.5 w-2 shrink-0" fill="none"><path d="M4 10V2M1 5L4 1.5L7 5" stroke="#f0b020" strokeWidth="1.8" /></svg>
    <span className="ml-1 flex-1">0.06K/S</span>
    <span className="flex size-5 shrink-0 items-center justify-center rounded-xs border border-[#a8c8d8] bg-[#d8ecf8]">
      <Explorer color="#3888d0" />
    </span>
  </div>
);

export default function App() {
  return (
    <div className="relative flex h-screen flex-col overflow-hidden bg-[#ece9d8] font-['Liberation_Mono','Noto_Sans_CJK_SC',monospace] text-black">
      <TitleBar />
      <MenuBar />
      <div className="shrink-0 border-b border-[#d8d4c0]">
        <div className="flex h-[30px] overflow-hidden">
          <Toolbar items={ROW1A} />
          <Toolbar items={ROW1B} />
          <Toolbar items={[]}>
            <input
              aria-label="Grid spacing"
              defaultValue="0.1000"
              className="my-auto h-5 w-16 border border-[#7f9db9] bg-white px-0.5 font-['Liberation_Sans',sans-serif] text-xs"
            />
          </Toolbar>
        </div>
        <div className="flex h-[30px]">
          <Toolbar items={ROW2A} />
          <Toolbar items={ROW2B} />
        </div>
        <div className="flex h-[30px]">
          <Toolbar items={ROW3} />
        </div>
      </div>
      <main className="flex min-h-0 flex-1">
        <Navigator />
        <div className="ml-[9px] flex min-w-0 flex-1 flex-col border-l border-black pr-1 pl-0.5">
          <div className="mt-0.5 flex min-h-0 flex-1 flex-col border-3 border-b-2 border-[#a3a094] border-r-white border-b-white">
            <SchematicCanvas />
          </div>
          <div className="mt-0.5 mb-0.5 flex h-[25px] shrink-0 bg-white">
            <button type="button" className="flex w-[91px] items-center gap-0.5 border-r border-b border-black bg-[#ece9d8] pl-1 text-[10px]">
              <SchematicDoc />
              Schemati...
            </button>
            <div className="flex-1 border-t border-black" />
          </div>
        </div>
      </main>
      <OutputPanel />
      <StatusBar />
      <Taskbar />
      <SpeedWidget />
    </div>
  );
}
